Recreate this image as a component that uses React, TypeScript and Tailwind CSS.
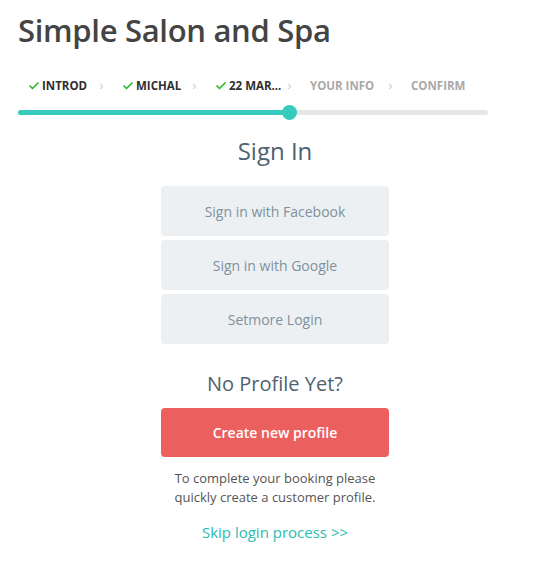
import { Check, ChevronRight } from "lucide-react";

const steps = [
  { label: "INTROD", done: true, w: "w-[94px]" },
  { label: "MICHAL", done: true, w: "w-[93px]" },
  { label: "22 MAR...", done: true, w: "w-[95px]" },
  { label: "YOUR INFO", done: false, w: "w-[101px]" },
  { label: "CONFIRM", done: false, w: "" },
];

function Steps() {
  return (
    <div className="flex h-[20px] items-center pl-[10px] text-[11.5px] font-bold">
      {steps.map((s, i) => (
        <div key={s.label} className={`flex items-center ${s.w}`}>
          {s.done && <Check size={12} strokeWidth={3.5} className="mr-[2px] text-[#2eb82e]" />}
          <span className={s.done ? "text-[#2f2f2f]" : "text-[#a9a9a9]"}>{s.label}</span>
          {i < steps.length - 1 && (
            <ChevronRight size={9} strokeWidth={3} className="ml-auto mr-[16px] text-[#d4d4d4]" />
          )}
        </div>
      ))}
    </div>
  );
}

function Progress() {
  return (
    <div className="relative mt-[14px] h-[5px] w-[470px] rounded-full bg-[#e6e6e6]">
      <div className="h-full w-[272px] rounded-full bg-[#36cbbd]" />
      <div className="absolute left-[264px] top-[-5px] h-[15px] w-[15px] rounded-full bg-[#36cbbd]" />
    </div>
  );
}

export default function App() {
  return (
    <div
      className="min-h-[562px] bg-white pl-[18px] pr-[2px] pt-[10px]"
      style={{ fontFamily: '"Open Sans", sans-serif' }}
    >
      <h1 className="text-[31px] font-semibold leading-[40px] tracking-[-0.01em] text-[#444444]">
        Simple Salon and Spa
      </h1>
      <div className="mt-[26px]">
        <Steps />
      </div>
      <Progress />

      <div className="flex flex-col items-center">
        <h2 className="mt-[20px] text-[24px] leading-[32px] text-[#4e6270]">Sign In</h2>
        <div className="mt-[19px] flex w-[228px] flex-col gap-[4px]">
          {["Sign in with Facebook", "Sign in with Google", "Setmore Login"].map((t) => (
            <button
              key={t}
              className="h-[50px] rounded-[4px] bg-[#ecf0f3] text-[14px] text-[#7f909c]"
            >
              {t}
            </button>
          ))}
        </div>
        <h2 className="mt-[26px] text-[20px] leading-[28px] text-[#4e6270]">No Profile Yet?</h2>
        <button className="mt-[10px] h-[49px] w-[228px] rounded-[4px] bg-[#eb5f5e] text-[14px] font-semibold text-white">
          Create new profile
        </button>
        <p className="mt-[12px] text-center text-[13px] leading-[19px] text-[#555555]">
          To complete your booking please
          <br />
          quickly create a customer profile.
        </p>
        <a href="#" className="mt-[15px] text-[15px] leading-[20px] text-[#2bbcb0]">
          Skip login process &gt;&gt;
        </a>
      </div>
    </div>
  );
}
